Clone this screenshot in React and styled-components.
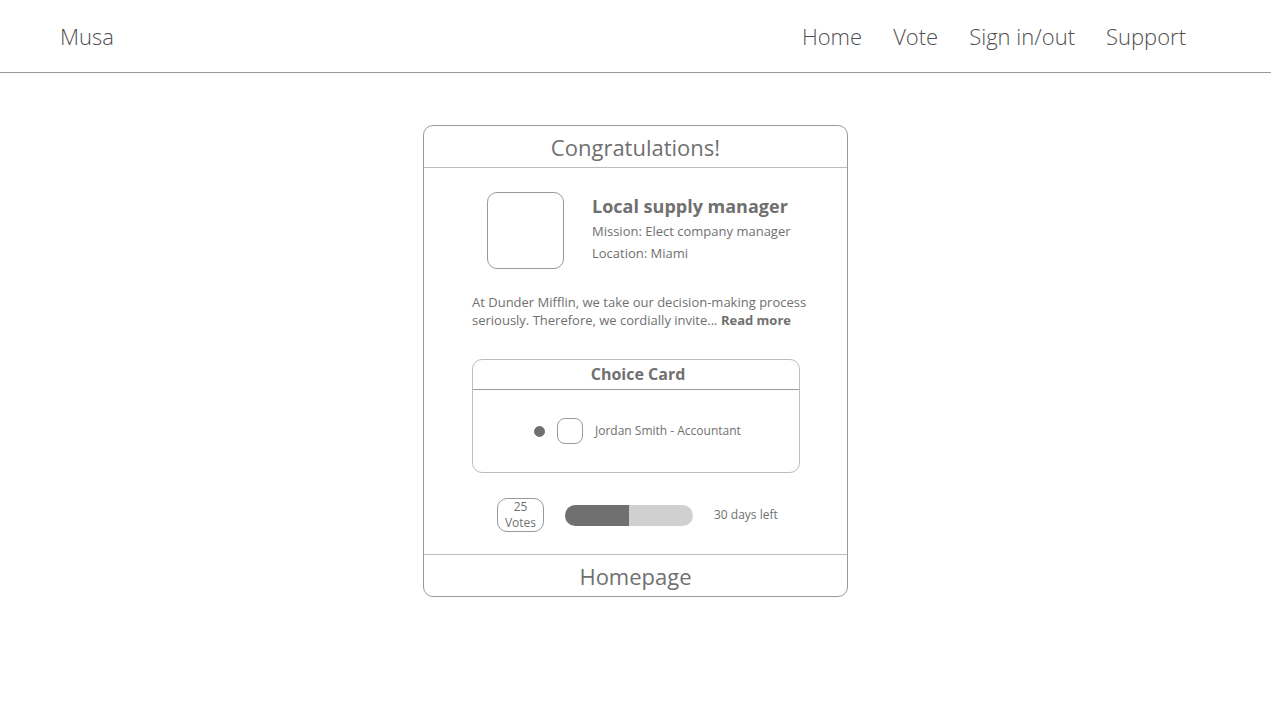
import React from 'react';
import styled, { createGlobalStyle } from 'styled-components';

const ink = '#707070';
const line = '#9a9a9a';
const softLine = '#bdbdbd';

const GlobalStyle = createGlobalStyle`
  *, *::before, *::after { box-sizing: border-box; }
  body {
    margin: 0;
    background: #fff;
    color: ${ink};
    font-family: 'Open Sans', 'Noto Sans', sans-serif;
    font-size: 13px;
  }
  h1, h2, h3, p { margin: 0; }
  a { color: inherit; text-decoration: none; }
`;

const TopBar = styled.header`
  display: flex;
  align-items: center;
  justify-content: space-between;
  height: 73px;
  padding: 0 85px 0 60px;
  border-bottom: 1px solid ${line};
  color: #505050;
  font-size: 22px;
  font-weight: 300;
  line-height: 30px;
`;

const Brand = styled.a``;

const Nav = styled.nav`
  display: flex;
  gap: 31px;
`;

const NavLink = styled.a`
  white-space: nowrap;
`;

const Main = styled.main`
  display: flex;
  justify-content: center;
  padding: 52px 16px;
`;

const Card = styled.article`
  width: 100%;
  max-width: 425px;
  border: 1px solid ${line};
  border-radius: 10px;
`;

const CardTitle = styled.h1`
  border-bottom: 1px solid ${softLine};
  font-size: 22px;
  font-weight: 400;
  line-height: 40px;
  padding-top: 1px;
  text-align: center;
`;

const CardBody = styled.div`
  padding: 24px 47px 22px 48px;
`;

const Profile = styled.section`
  display: flex;
  gap: 28px;
  padding: 0 15px;
`;

const Frame = styled.div`
  flex: none;
  width: ${(p) => p.$size}px;
  height: ${(p) => p.$size}px;
  border: 1px solid ${line};
  border-radius: ${(p) => p.$radius}px;
`;

const ProfileName = styled.h2`
  font-size: 18px;
  font-weight: 700;
  line-height: 28px;
  white-space: nowrap;
`;

const Detail = styled.p`
  line-height: 22px;
  white-space: nowrap;
`;

const Summary = styled.p`
  margin: 24px -12px 0 0;
  line-height: 18px;
`;

const ReadMore = styled.a`
  font-weight: 700;
`;

const Choice = styled.section`
  margin-top: 30px;
  border: 1px solid ${softLine};
  border-radius: 10px;
`;

const ChoiceTitle = styled.h3`
  border-bottom: 1px solid ${line};
  font-size: 16px;
  font-weight: 700;
  line-height: 29px;
  padding-left: 4px;
  text-align: center;
`;

const Option = styled.label`
  display: flex;
  align-items: center;
  gap: 12px;
  padding: 28px 61px;
  font-size: 12px;
  line-height: 16px;
  white-space: nowrap;
`;

const Radio = styled.input`
  appearance: none;
  flex: none;
  width: 11px;
  height: 11px;
  margin: 0;
  border: 1px solid ${ink};
  border-radius: 50%;
  &:checked { background: ${ink}; }
`;

const Status = styled.section`
  display: flex;
  align-items: center;
  gap: 21px;
  margin-top: 25px;
  padding: 0 25px;
  font-size: 12px;
  line-height: 16px;
  white-space: nowrap;
`;

const Votes = styled.div`
  display: flex;
  flex-direction: column;
  flex: none;
  width: 47px;
  border: 1px solid ${line};
  border-radius: 10px;
  text-align: center;
`;

const Track = styled.div`
  flex: none;
  width: 128px;
  height: 21px;
  overflow: hidden;
  border-radius: 11px;
  background: #d0d0d0;
`;

const Fill = styled.div`
  height: 100%;
  background: ${ink};
`;

const CardFooter = styled.footer`
  border-top: 1px solid ${softLine};
  font-size: 22px;
  line-height: 40px;
  padding-top: 1px;
  text-align: center;
`;

const FooterLink = styled.a`
  display: block;
`;

const links = ['Home', 'Vote', 'Sign in/out', 'Support'];

export default function App() {
  const progress = 50;
  return (
    <>
      <GlobalStyle />
      <TopBar>
        <Brand href="#">Musa</Brand>
        <Nav>
          {links.map((label) => (
            <NavLink href="#" key={label}>{label}</NavLink>
          ))}
        </Nav>
      </TopBar>
      <Main>
        <Card>
          <CardTitle>Congratulations!</CardTitle>
          <CardBody>
            <Profile>
              <Frame $size={77} $radius={10} />
              <div>
                <ProfileName>Local supply manager</ProfileName>
                <Detail>Mission: Elect company manager</Detail>
                <Detail>Location: Miami</Detail>
              </div>
            </Profile>
            <Summary>
              At Dunder Mifflin, we take our decision-making process seriously.
              Therefore, we cordially invite... <ReadMore href="#">Read more</ReadMore>
            </Summary>
            <Choice>
              <ChoiceTitle>Choice Card</ChoiceTitle>
              <Option>
                <Radio type="radio" name="choice" defaultChecked />
                <Frame $size={26} $radius={8} />
                <span>Jordan Smith - Accountant</span>
              </Option>
            </Choice>
            <Status>
              <Votes>
                <span>25</span>
                <span>Votes</span>
              </Votes>
              <Track role="progressbar" aria-label="Time elapsed" aria-valuenow={progress}>
                <Fill style={{ width: `${progress}%` }} />
              </Track>
              <span>30 days left</span>
            </Status>
          </CardBody>
          <CardFooter>
            <FooterLink href="#">Homepage</FooterLink>
          </CardFooter>
        </Card>
      </Main>
    </>
  );
}
